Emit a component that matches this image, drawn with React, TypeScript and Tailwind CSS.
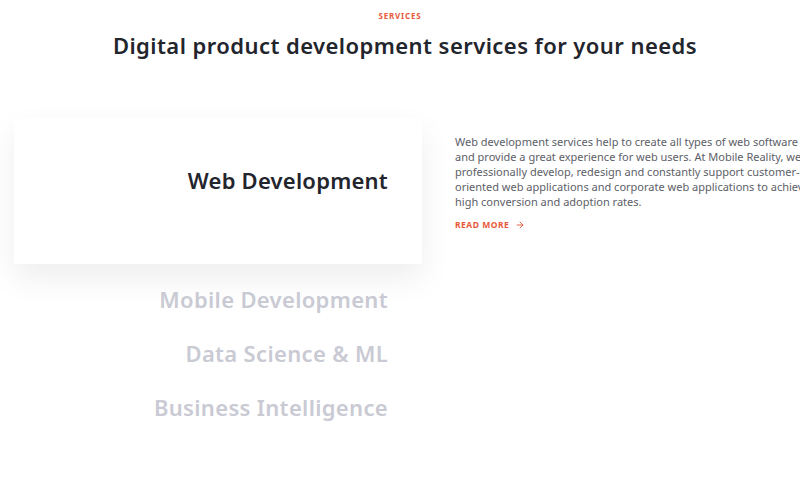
import { ArrowRight } from "lucide-react";

const others = ["Mobile Development", "Data Science & ML", "Business Intelligence"];

const lines = [
  "Web development services help to create all types of web software",
  "and provide a great experience for web users. At Mobile Reality, we",
  "professionally develop, redesign and constantly support customer-",
  "oriented web applications and corporate web applications to achieve",
  "high conversion and adoption rates.",
];

export default function App() {
  return (
    <div
      className="w-[800px] h-[480px] overflow-hidden bg-white"
      style={{ fontFamily: '"Noto Sans", "Open Sans", sans-serif' }}
    >
      <div className="pt-[11px] text-center">
        <div className="text-[8px] leading-[10px] font-bold tracking-[0.1em] text-[#e8593b]">SERVICES</div>
        <h1 className="mt-[10px] pl-[10px] text-[22px] leading-[28px] font-semibold text-[#23252d] tracking-[0.02em]">
          Digital product development services for your needs
        </h1>
      </div>

      <div className="mt-[59px] flex">
        <div className="w-[422px] shrink-0">
          <div className="ml-[14px] h-[146px] bg-white shadow-[0_14px_30px_rgba(0,0,0,0.07)] flex items-center justify-end pr-[34px] pb-[22px]">
            <span className="text-[22px] font-semibold text-[#23252d] tracking-[0.01em]">Web Development</span>
          </div>
          <div className="mt-[19px] flex flex-col items-end pr-[34px] gap-[22px]">
            {others.map((o) => (
              <span key={o} className="text-[22px] leading-[32px] font-semibold tracking-[0.015em] text-[#c9cad3]">
                {o}
              </span>
            ))}
          </div>
        </div>
        <div className="ml-[33px] pt-[16px]">
          <div className="text-[11px] leading-[15px] text-[#5d6068] whitespace-nowrap">
            {lines.map((l) => (
              <div key={l}>{l}</div>
            ))}
          </div>
          <div className="mt-[10px] flex items-center gap-[6px] text-[8.5px] font-bold tracking-[0.06em] text-[#e8593b]">
            READ MORE
            <ArrowRight size={10} strokeWidth={2.2} />
          </div>
        </div>
      </div>
    </div>
  );
}
